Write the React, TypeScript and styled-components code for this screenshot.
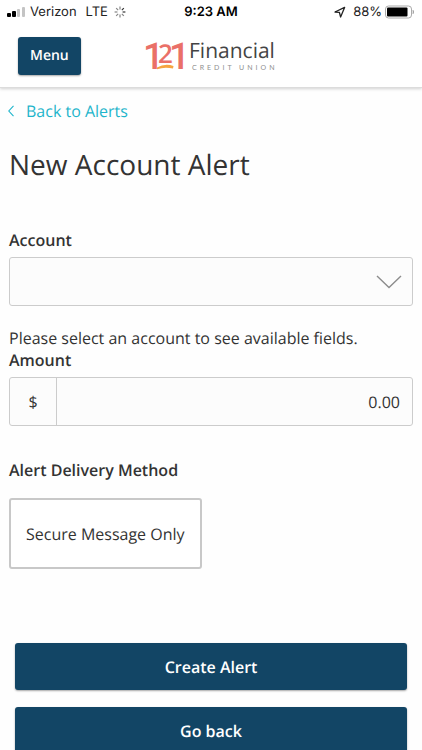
import React from "react";
import styled, { createGlobalStyle } from "styled-components";

const GlobalStyle = createGlobalStyle`
  *, *::before, *::after { box-sizing: border-box; }
  html { scrollbar-width: none; }
  body {
    margin: 0;
    background: #fefefe;
    color: #333;
    font-family: "Open Sans", "Noto Sans", sans-serif;
    font-size: 16px;
    line-height: 22px;
    text-rendering: geometricPrecision;
  }
  button, input, select { font: inherit; color: inherit; text-rendering: inherit; }
`;

const Header = styled.header`
  background: #fff;
  border-bottom: 1px solid #dcdcdc;
  box-shadow: 0 1px 3px rgba(0, 0, 0, 0.18);
`;

const StatusBar = styled.div`
  display: grid;
  grid-template-columns: 1fr auto 1fr;
  align-items: center;
  height: 24px;
  padding: 0 7px;
  font-family: Inter, "Liberation Sans", sans-serif;
  font-size: 13px;
  line-height: 16px;
  color: #222;
`;

const StatusGroup = styled.div<{ $end?: boolean }>`
  display: flex;
  align-items: center;
  justify-content: ${(p) => (p.$end ? "flex-end" : "flex-start")};
  gap: ${(p) => (p.$end ? "3px" : "5px")};
`;

const Network = styled.span`
  margin: 0 1px 0 4px;
`;

const Clock = styled.time`
  font-weight: 600;
  color: #000;
`;

const Percent = styled.span`
  margin-left: 4px;
`;

const NavBar = styled.div`
  display: grid;
  grid-template-columns: 1fr auto 1fr;
  align-items: center;
  height: 63px;
  padding: 0 18px;
`;

const Button = styled.button<{ $block?: boolean }>`
  justify-self: start;
  width: ${(p) => (p.$block ? "100%" : "auto")};
  height: ${(p) => (p.$block ? "47px" : "38px")};
  padding: 0 12px;
  border: 0;
  border-radius: 3px;
  background: #124565;
  box-shadow: 0 1px 2px rgba(0, 0, 0, 0.35);
  color: #fff;
  font-size: ${(p) => (p.$block ? "16px" : "14px")};
  font-weight: 600;
  cursor: pointer;
`;

const Logo = styled.svg`
  display: block;
  width: 132px;
  height: 36px;
  overflow: visible;
`;

const Page = styled.main`
  padding: 12px 9px 16px;
`;

const BackLink = styled.a`
  display: inline-flex;
  align-items: center;
  gap: 12px;
  margin-left: -1px;
  color: #1fb5cb;
  text-decoration: none;
`;

const Title = styled.h1`
  margin: 23px 0 44px;
  font-size: 28px;
  line-height: 40px;
  font-weight: 400;
`;

const Label = styled.label`
  display: block;
  font-weight: 600;
`;

const SelectBox = styled.div`
  display: grid;
  align-items: center;
  margin: 6px 0 21px;
`;

const Select = styled.select`
  grid-area: 1 / 1;
  appearance: none;
  width: 100%;
  height: 49px;
  padding: 0 48px 0 12px;
  border: 1px solid #ccc;
  border-radius: 3px;
  background: #fcfcfc;
`;

const SelectArrow = styled.svg`
  grid-area: 1 / 1;
  justify-self: end;
  margin-right: 11px;
  pointer-events: none;
`;

const Hint = styled.p`
  margin: 0;
`;

const AmountBox = styled.div`
  display: flex;
  height: 49px;
  margin: 6px 0 33px;
  border: 1px solid #ccc;
  border-radius: 3px;
  background: #fcfcfc;
`;

const Currency = styled.span`
  display: flex;
  align-items: center;
  justify-content: center;
  width: 47px;
  border-right: 1px solid #ccc;
`;

const AmountInput = styled.input`
  flex: 1;
  min-width: 0;
  padding: 0 12px;
  border: 0;
  background: transparent;
  text-align: right;
  &::placeholder { color: #333; opacity: 1; }
`;

const Delivery = styled.fieldset`
  margin: 0 0 74px;
  padding: 0;
  border: 0;
`;

const Legend = styled.legend`
  padding: 0;
  font-weight: 600;
`;

const Choice = styled.button`
  display: block;
  height: 71px;
  margin-top: 17px;
  padding: 0 15px;
  border: 2px solid #c8c8c8;
  border-radius: 3px;
  background: #fff;
  cursor: pointer;
`;

const Actions = styled.div`
  display: grid;
  gap: 17px;
  padding: 0 6px;
`;

const SPOKES = [0, 45, 90, 135, 180, 225, 270, 315];

export default function App() {
  return (
    <>
      <GlobalStyle />
      <Header>
        <StatusBar>
          <StatusGroup>
            <svg width="18" height="12" viewBox="0 0 18 12" aria-label="Signal">
              <rect x="0" y="7" width="4" height="4" rx="1" fill="#000" />
              <rect x="5" y="5" width="4" height="6" rx="1" fill="#000" />
              <rect x="10" y="3" width="3" height="8" rx="1" fill="#c4c4c4" />
              <rect x="15" y="1" width="3" height="10" rx="1" fill="#c4c4c4" />
            </svg>
            <span>Verizon</span>
            <Network>LTE</Network>
            <svg width="12" height="12" viewBox="0 0 12 12" aria-label="Loading">
              {SPOKES.map((a, i) => (
                <path
                  key={a}
                  d="M6 3.4V0.6"
                  transform={`rotate(${a} 6 6)`}
                  stroke="#333"
                  strokeWidth="1.2"
                  opacity={i === 1 || i === 2 ? 1 : 0.6}
                />
              ))}
            </svg>
          </StatusGroup>
          <Clock>9:23 AM</Clock>
          <StatusGroup $end>
            <svg width="12" height="12" viewBox="0 0 12 12" aria-label="Location">
              <path d="M1 6L10.6 1.4L6.6 11L5.4 6.4Z" fill="none" stroke="#222" strokeWidth="1.3" strokeLinejoin="round" />
            </svg>
            <Percent>88%</Percent>
            <svg width="30" height="14" viewBox="0 0 30 14" aria-label="Battery">
              <rect x="0.5" y="1" width="26" height="12" rx="3" fill="none" stroke="#aaa" />
              <rect x="2" y="2.5" width="20.5" height="9" rx="1" fill="#000" />
              <path d="M28 5.2Q29.4 7 28 8.8Z" fill="#999" stroke="#999" strokeWidth="0.6" />
            </svg>
          </StatusGroup>
        </StatusBar>
        <NavBar>
          <Button type="button">Menu</Button>
          <Logo viewBox="0 0 132 36" role="img" aria-label="121 Financial Credit Union">
            <g fill="#ea7068" fontFamily="Roboto" fontWeight="500">
              <text x="-2" y="31" fontSize="37">1</text>
              <text x="13" y="25" fontSize="26" fontFamily="Open Sans" fontWeight="600">2</text>
              <text x="24" y="31" fontSize="37">1</text>
            </g>
            <path d="M12 29.5Q20 25 28.5 28L28 30.6Q20 28.4 12 31.2Z" fill="#f6a440" />
            <text x="44" y="20" fontFamily="Open Sans" fontSize="21" fill="#444">Financial</text>
            <text x="47" y="32" fontFamily="Lato" fontSize="7" letterSpacing="3" fill="#8f8f8f">CREDIT UNION</text>
          </Logo>
        </NavBar>
      </Header>
      <Page>
        <BackLink href="#alerts">
          <svg width="6" height="12" viewBox="0 0 6 12" aria-hidden="true">
            <path d="M5.5 0.8L0.8 6L5.5 11.2" fill="none" stroke="currentColor" strokeWidth="1.1" />
          </svg>
          Back to Alerts
        </BackLink>
        <Title>New Account Alert</Title>
        <form onSubmit={(e) => e.preventDefault()}>
          <Label htmlFor="account">Account</Label>
          <SelectBox>
            <Select id="account" defaultValue="">
              <option value="" />
            </Select>
            <SelectArrow width="26" height="14" viewBox="0 0 26 14" aria-hidden="true">
              <path d="M1 1L13 12.5L25 1" fill="none" stroke="#8c8c8c" strokeWidth="1.4" />
            </SelectArrow>
          </SelectBox>
          <Hint>Please select an account to see available fields.</Hint>
          <Label htmlFor="amount">Amount</Label>
          <AmountBox>
            <Currency>$</Currency>
            <AmountInput id="amount" inputMode="decimal" placeholder="0.00" />
          </AmountBox>
          <Delivery>
            <Legend>Alert Delivery Method</Legend>
            <Choice type="button">Secure Message Only</Choice>
          </Delivery>
          <Actions>
            <Button $block type="submit">Create Alert</Button>
            <Button $block type="button">Go back</Button>
          </Actions>
        </form>
      </Page>
    </>
  );
}
